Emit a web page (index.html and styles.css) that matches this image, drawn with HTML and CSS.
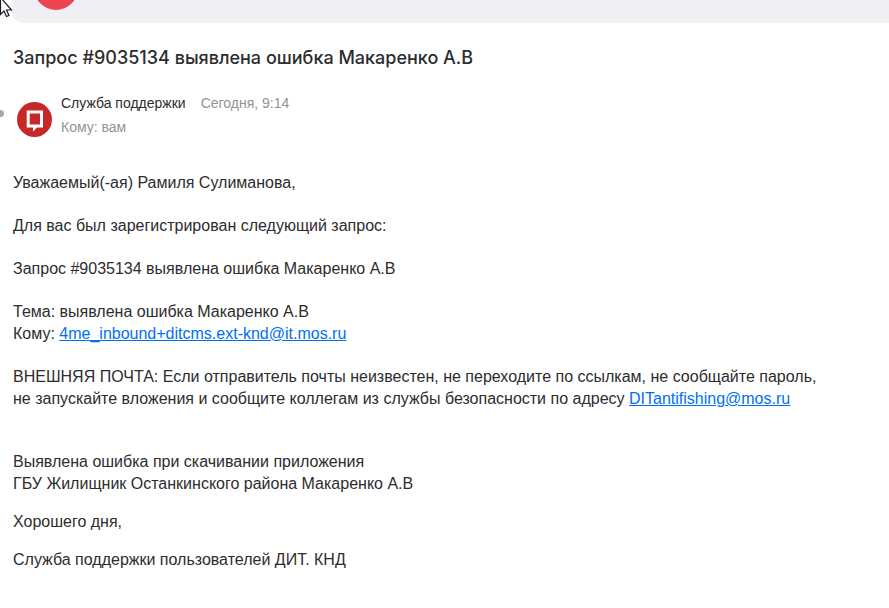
FILE: index.html
```html
<!DOCTYPE html>
<html lang="ru">

<head>
    <meta charset="UTF-8" />
    <meta name="viewport" content="width=device-width, initial-scale=1.0" />
    <title>Запрос #9035134 выявлена ошибка Макаренко А.В</title>
    <link rel="stylesheet" href="styles.css">
</head>

<body>
    <header class="topbar">
        <span class="topbar-badge"></span>
    </header>

    <main class="letter">
        <h1 class="subject">Запрос #9035134 выявлена ошибка Макаренко А.В</h1>

        <div class="sender">
            <span class="unread"></span>
            <svg class="avatar" viewBox="0 0 35 35" aria-hidden="true">
                <circle cx="17.5" cy="17.5" r="17.5" fill="#c62828" />
                <path d="M9.700 8.500h16.300v17h-6l-4 4v-4h-6.300zM12.700 11.500v11h10.300v-11z" fill="#fff" fill-rule="evenodd" />
            </svg>
            <div class="sender-info">
                <div class="sender-line">
                    <span class="sender-name">Служба поддержки</span>
                    <time class="date">Сегодня, 9:14</time>
                </div>
                <div class="recipient">Кому: <span class="recipient-name">вам</span></div>
            </div>
        </div>

        <div class="body">
            <p>Уважаемый(-ая) Рамиля Сулиманова,</p>
            <p>Для вас был зарегистрирован следующий запрос:</p>
            <p>Запрос #9035134 выявлена ошибка Макаренко А.В</p>
            <p>Тема: выявлена ошибка Макаренко А.В<br>
                Кому: <a href="mailto:4me_inbound+ditcms.ext-knd@it.mos.ru">4me_inbound+ditcms.ext-knd@it.mos.ru</a></p>
            <p>ВНЕШНЯЯ ПОЧТА: Если отправитель почты неизвестен, не переходите по ссылкам, не сообщайте пароль,<br>
                не запускайте вложения и сообщите коллегам из службы безопасности по адресу
                <a href="mailto:DITantifishing@mos.ru">DITantifishing@mos.ru</a></p>
            <p class="report">Выявлена ошибка при скачивании приложения<br>
                ГБУ Жилищник Останкинского района Макаренко А.В</p>
        </div>

        <footer class="signature">
            <p>Хорошего дня,</p>
            <p>Служба поддержки пользователей ДИТ. КНД</p>
        </footer>
    </main>

    <svg class="cursor" viewBox="0 0 14 20" aria-hidden="true">
        <path d="M.5-2.500v17l3.500-3.500 2.500 5.500 2.500-1-2.500-5.500h5z" fill="#fff" stroke="#1c1826" stroke-width="1.200" />
    </svg>
</body>

</html>
```

FILE: styles.css
```css
body {
    margin: 0;
    background-color: #fff;
    color: #2c2d2e;
    font-family: "Liberation Sans", Arial, sans-serif;
    font-size: 16px;
    line-height: 22px;
}

p {
    margin: 0;
}

a {
    color: #0070f0;
}

.topbar {
    height: 23px;
    margin-left: 12px;
    padding-left: 22px;
    background-color: #eff0f4;
    border-bottom-left-radius: 12px;
    display: flex;
    align-items: flex-end;
    overflow: hidden;
}

.topbar-badge {
    flex: none;
    width: 44px;
    height: 44px;
    margin-bottom: 13px;
    border-radius: 50%;
    background-color: #ed4651;
}

.letter {
    padding: 22px 13px;
}

.subject {
    margin: 0;
    font-family: Inter, sans-serif;
    font-size: 18px;
    font-weight: 500;
    line-height: 26px;
}

.sender {
    position: relative;
    display: flex;
    gap: 9px;
    margin-top: 20px;
    padding-left: 4px;
    font-size: 14px;
    line-height: 24px;
}

.unread {
    position: absolute;
    left: -16px;
    top: 19px;
    width: 7px;
    height: 7px;
    border-radius: 50%;
    background-color: #a5a7ad;
}

.avatar {
    width: 35px;
    height: 35px;
    margin-top: 11px;
}

.sender-line {
    display: flex;
    gap: 15px;
}

.date,
.recipient {
    color: #919399;
}

.body {
    display: flex;
    flex-direction: column;
    gap: 21px;
    margin-top: 33px;
}

.report {
    margin-top: 20px;
}

.signature {
    display: flex;
    flex-direction: column;
    gap: 16px;
    margin-top: 16px;
}

.cursor {
    position: absolute;
    left: 0;
    top: 0;
    width: 14px;
    height: 20px;
}
```
